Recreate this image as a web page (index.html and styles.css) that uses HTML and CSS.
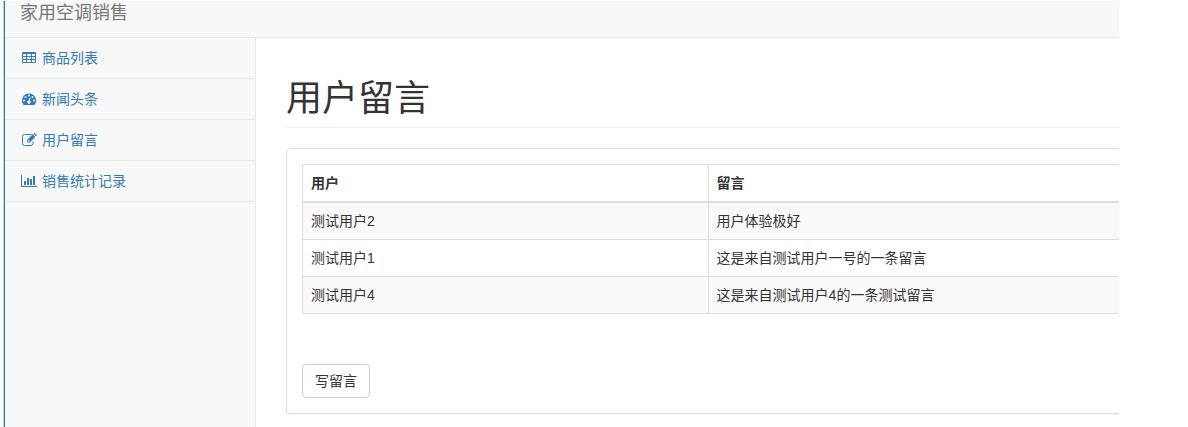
FILE: index.html
```html
<!DOCTYPE html>
<html lang="zh-CN">
<head>
  <meta charset="UTF-8">
  <title>家用空调销售</title>
  <link rel="stylesheet" href="styles.css">
</head>
<body>
  <div class="wrapper">
    <header class="navbar">
      <a class="navbar-brand" href="#">家用空调销售</a>
    </header>

    <div class="main">
      <nav class="sidebar">
        <ul class="side-menu">
          <li>
            <a href="#">
              <svg class="icon" viewBox="0 0 16 14" aria-hidden="true">
                <path fill="currentColor" fill-rule="evenodd" d="M2 1h12a1 1 0 0 1 1 1v9a1 1 0 0 1-1 1H2a1 1 0 0 1-1-1V2a1 1 0 0 1 1-1zM2 3v2h3V3zM6 3v2h4V3zM11 3v2h3V3zM2 6v2h3V6zM6 6v2h4V6zM11 6v2h3V6zM2 9v2h3V9zM6 9v2h4V9zM11 9v2h3V9z"/>
              </svg>
              商品列表
            </a>
          </li>
          <li>
            <a href="#">
              <svg class="icon" viewBox="0 0 16 14" aria-hidden="true">
                <path fill="currentColor" d="M8 1.500a7 7 0 0 0-5.900 10.800q.2.700.8.700h10.200q.6 0 .8-.7A7 7 0 0 0 8 1.500z"/>
                <g fill="#f8f8f8">
                  <circle cx="3" cy="8.500" r="1"/>
                  <circle cx="4.500" cy="5" r="1"/>
                  <circle cx="8" cy="3.500" r="1"/>
                  <circle cx="11.500" cy="5" r="1"/>
                  <circle cx="13" cy="8.500" r="1"/>
                  <path d="M8.700 5.500l.9.300-.8 3a1.600 1.600 0 1 1-1-.2z"/>
                </g>
              </svg>
              新闻头条
            </a>
          </li>
          <li>
            <a href="#">
              <svg class="icon" viewBox="0 0 16 14" aria-hidden="true">
                <path fill="none" stroke="currentColor" d="M10.500 1.500H3.500A2 2 0 0 0 1.500 3.500v7a2 2 0 0 0 2 2H10a2 2 0 0 0 2-2V8.500"/>
                <path fill="currentColor" fill-rule="evenodd" d="M11.700 1.300L14.300 3.900 8.700 9.500H6.100V6.900zM7 7.700v1h1l.6-.6-1-1zM12.400.7l.6-.5q.5-.4 1 0l1.500 1.500q.4.500 0 1l-.6.500z"/>
              </svg>
              用户留言
            </a>
          </li>
          <li>
            <a href="#">
              <svg class="icon" viewBox="0 0 16 14" aria-hidden="true">
                <path fill="currentColor" d="M0 1h1v11h15v1H0zM3 7h2v4H3zM6 4h2v7H6zM9 5h2v6H9zM12 2h2v9h-2z"/>
              </svg>
              销售统计记录
            </a>
          </li>
        </ul>
      </nav>

      <main class="page">
        <h1 class="page-header">用户留言</h1>

        <div class="panel">
          <table class="table">
            <thead>
              <tr>
                <th class="col-user" scope="col">用户</th>
                <th scope="col">留言</th>
              </tr>
            </thead>
            <tbody>
              <tr>
                <td>测试用户2</td>
                <td>用户体验极好</td>
              </tr>
              <tr>
                <td>测试用户1</td>
                <td>这是来自测试用户一号的一条留言</td>
              </tr>
              <tr>
                <td>测试用户4</td>
                <td>这是来自测试用户4的一条测试留言</td>
              </tr>
            </tbody>
          </table>
          <button type="button" class="btn">写留言</button>
        </div>
      </main>
    </div>
  </div>
</body>
</html>
```
FILE: styles.css
```css
* {
  box-sizing: border-box;
}

body {
  margin: 0;
  padding: 1px 69px 0 4px;
  font-family: "Liberation Sans", "Noto Sans CJK SC", sans-serif;
  font-size: 14px;
  line-height: 20px;
  color: #333;
  background: #fff;
}

a {
  color: #337ab7;
  text-decoration: none;
}

.wrapper {
  display: flex;
  flex-direction: column;
  min-height: calc(100vh - 1px);
  border-left: 1px solid #1a80cf;
  box-shadow: -1px 0 0 #ccc;
  overflow: hidden;
}

/* top bar */
.navbar {
  padding: 0 15px 12px;
  background: #f8f8f8;
  border-bottom: 1px solid #e7e7e7;
}

.navbar-brand {
  display: block;
  font-size: 18px;
  line-height: 24px;
  color: #777;
}

.main {
  display: flex;
  flex: 1;
}

/* side menu */
.sidebar {
  flex: 0 0 251px;
  background: #f8f8f8;
  border-right: 1px solid #e7e7e7;
}

.side-menu {
  margin: 0;
  padding: 0;
  list-style: none;
}

.side-menu li {
  border-bottom: 1px solid #e7e7e7;
}

.side-menu a {
  display: flex;
  align-items: center;
  gap: 5px;
  padding: 10px 16px;
}

.icon {
  width: 16px;
  height: 14px;
}

/* content */
.page {
  flex: 1;
  min-width: 0;
  padding-left: 30px;
}

.page-header {
  margin: 41px 0 20px;
  padding-bottom: 8px;
  font-size: 36px;
  font-weight: 400;
  line-height: 40px;
  border-bottom: 1px solid #eee;
}

/* runs past the right edge of the wrapper */
.panel {
  margin-right: -45px;
  padding: 15px;
  border: 1px solid #ddd;
  border-radius: 4px;
  box-shadow: 0 1px 1px rgba(0, 0, 0, 0.05);
}

.table {
  width: 100%;
  margin-bottom: 50px;
  border: 1px solid #ddd;
  border-collapse: collapse;
}

.table th,
.table td {
  padding: 8px;
  border: 1px solid #ddd;
  text-align: left;
}

.table th {
  border-bottom-width: 2px;
}

.table tbody tr:nth-child(odd) {
  background: #f9f9f9;
}

.col-user {
  width: 48%;
}

.btn {
  display: block;
  padding: 6px 12px;
  font: inherit;
  color: #333;
  background: #fff;
  border: 1px solid #ccc;
  border-radius: 4px;
  cursor: pointer;
}
```
